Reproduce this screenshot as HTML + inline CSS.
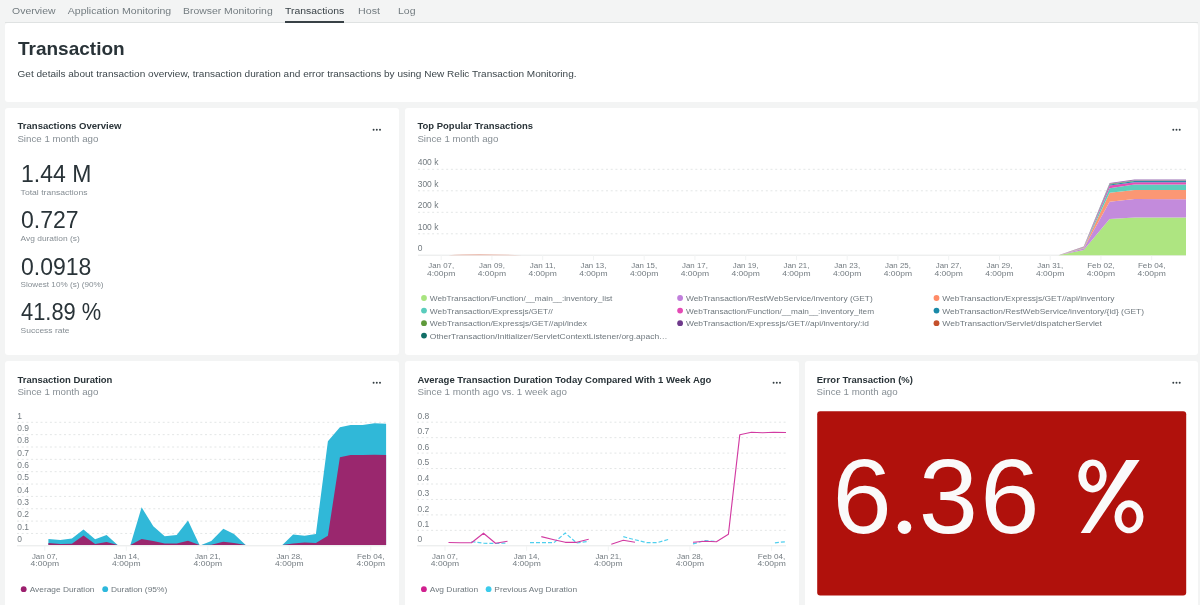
<!DOCTYPE html>
<html><head><meta charset="utf-8"><style>
html,body{margin:0;padding:0;width:1200px;height:605px;overflow:hidden;background:#f3f4f4}
svg{display:block;will-change:transform;-webkit-font-smoothing:antialiased;font-family:"Liberation Sans", sans-serif}
</style></head><body>
<svg width="1200" height="605" viewBox="0 0 1200 605">
<rect x="0" y="0" width="1200" height="605" fill="#f3f4f4"/>
<rect x="5" y="22" width="1193" height="1" fill="#dfe2e2"/>
<text x="12.1" y="14" font-size="9.7" fill="#737c80" font-weight="400" text-anchor="start" textLength="43.4" lengthAdjust="spacingAndGlyphs" >Overview</text>
<text x="67.8" y="14" font-size="9.7" fill="#737c80" font-weight="400" text-anchor="start" textLength="103.4" lengthAdjust="spacingAndGlyphs" >Application Monitoring</text>
<text x="183.0" y="14" font-size="9.7" fill="#737c80" font-weight="400" text-anchor="start" textLength="89.7" lengthAdjust="spacingAndGlyphs" >Browser Monitoring</text>
<text x="285.1" y="14" font-size="9.7" fill="#3a4348" font-weight="400" text-anchor="start" textLength="59.1" lengthAdjust="spacingAndGlyphs" >Transactions</text>
<text x="358.0" y="14" font-size="9.7" fill="#737c80" font-weight="400" text-anchor="start" textLength="22.0" lengthAdjust="spacingAndGlyphs" >Host</text>
<text x="398.0" y="14" font-size="9.7" fill="#737c80" font-weight="400" text-anchor="start" textLength="17.5" lengthAdjust="spacingAndGlyphs" >Log</text>
<rect x="285" y="21" width="59" height="2" fill="#384146"/>
<rect x="5" y="23" width="1193" height="79" rx="3" fill="#ffffff"/>
<rect x="5" y="108" width="394" height="247" rx="3" fill="#ffffff"/>
<rect x="405" y="108" width="793" height="247" rx="3" fill="#ffffff"/>
<rect x="5" y="361" width="394" height="279" rx="3" fill="#ffffff"/>
<rect x="405" y="361" width="394" height="279" rx="3" fill="#ffffff"/>
<rect x="805" y="361" width="393" height="279" rx="3" fill="#ffffff"/>
<text x="18" y="55" font-size="19" fill="#293338" font-weight="700" text-anchor="start" >Transaction</text>
<text x="17.5" y="76.5" font-size="9.3" fill="#3d474c" font-weight="400" text-anchor="start" textLength="559" lengthAdjust="spacingAndGlyphs" >Get details about transaction overview, transaction duration and error transactions by using New Relic Transaction Monitoring.</text>
<text x="17.5" y="129.4" font-size="9.6" fill="#293338" font-weight="700" text-anchor="start" textLength="103.9" lengthAdjust="spacingAndGlyphs" >Transactions Overview</text>
<text x="17.4" y="142.0" font-size="9.6" fill="#868e94" font-weight="400" text-anchor="start" textLength="81.0" lengthAdjust="spacingAndGlyphs" >Since 1 month ago</text>
<circle cx="373.6" cy="129.7" r="0.98" fill="#343e43"/>
<circle cx="376.8" cy="129.7" r="0.98" fill="#343e43"/>
<circle cx="380.0" cy="129.7" r="0.98" fill="#343e43"/>
<text x="21" y="182.2" font-size="23" fill="#293338" font-weight="400" text-anchor="start" >1.44 M</text>
<text x="20.6" y="195.0" font-size="8.0" fill="#868e94" font-weight="400" text-anchor="start" textLength="66.9" lengthAdjust="spacingAndGlyphs" >Total transactions</text>
<text x="21" y="228" font-size="23" fill="#293338" font-weight="400" text-anchor="start" >0.727</text>
<text x="20.6" y="240.8" font-size="8.0" fill="#868e94" font-weight="400" text-anchor="start" textLength="59.1" lengthAdjust="spacingAndGlyphs" >Avg duration (s)</text>
<text x="21" y="274.5" font-size="23" fill="#293338" font-weight="400" text-anchor="start" >0.0918</text>
<text x="20.6" y="287.3" font-size="8.0" fill="#868e94" font-weight="400" text-anchor="start" textLength="82.8" lengthAdjust="spacingAndGlyphs" >Slowest 10% (s) (90%)</text>
<text x="21" y="320" font-size="23" fill="#293338" font-weight="400" text-anchor="start" textLength="80.2" lengthAdjust="spacingAndGlyphs" >41.89 %</text>
<text x="20.6" y="332.8" font-size="8.0" fill="#868e94" font-weight="400" text-anchor="start" textLength="48.9" lengthAdjust="spacingAndGlyphs" >Success rate</text>
<text x="417.5" y="129.4" font-size="9.6" fill="#293338" font-weight="700" text-anchor="start" textLength="115.5" lengthAdjust="spacingAndGlyphs" >Top Popular Transactions</text>
<text x="417.4" y="142.0" font-size="9.6" fill="#868e94" font-weight="400" text-anchor="start" textLength="81.0" lengthAdjust="spacingAndGlyphs" >Since 1 month ago</text>
<circle cx="1173.3" cy="129.7" r="0.98" fill="#343e43"/>
<circle cx="1176.5" cy="129.7" r="0.98" fill="#343e43"/>
<circle cx="1179.7" cy="129.7" r="0.98" fill="#343e43"/>
<line x1="418" y1="169.3" x2="1186" y2="169.3" stroke="#e3e6e6" stroke-width="1" stroke-dasharray="2 2.7"/>
<line x1="418" y1="190.8" x2="1186" y2="190.8" stroke="#e3e6e6" stroke-width="1" stroke-dasharray="2 2.7"/>
<line x1="418" y1="212.3" x2="1186" y2="212.3" stroke="#e3e6e6" stroke-width="1" stroke-dasharray="2 2.7"/>
<line x1="418" y1="233.8" x2="1186" y2="233.8" stroke="#e3e6e6" stroke-width="1" stroke-dasharray="2 2.7"/>
<text x="417.7" y="165.20000000000002" font-size="8.6" fill="#737b80" font-weight="400" text-anchor="start" textLength="20.74" lengthAdjust="spacingAndGlyphs" >400 k</text>
<text x="417.7" y="186.70000000000002" font-size="8.6" fill="#737b80" font-weight="400" text-anchor="start" textLength="20.74" lengthAdjust="spacingAndGlyphs" >300 k</text>
<text x="417.7" y="208.20000000000002" font-size="8.6" fill="#737b80" font-weight="400" text-anchor="start" textLength="20.74" lengthAdjust="spacingAndGlyphs" >200 k</text>
<text x="417.7" y="229.70000000000002" font-size="8.6" fill="#737b80" font-weight="400" text-anchor="start" textLength="20.74" lengthAdjust="spacingAndGlyphs" >100 k</text>
<text x="417.7" y="251.1" font-size="8.6" fill="#737b80" font-weight="400" text-anchor="start" textLength="4.72" lengthAdjust="spacingAndGlyphs" >0</text>
<line x1="418" y1="255.2" x2="1186" y2="255.2" stroke="#e6e8e8" stroke-width="1"/>
<line x1="441.2" y1="255.2" x2="441.2" y2="260.2" stroke="#f1f3f3" stroke-width="1"/>
<text x="441.2" y="268.3" font-size="8.0" fill="#737b80" font-weight="400" text-anchor="middle" textLength="25.8" lengthAdjust="spacingAndGlyphs" >Jan 07,</text>
<text x="441.2" y="275.6" font-size="8.0" fill="#737b80" font-weight="400" text-anchor="middle" textLength="28.4" lengthAdjust="spacingAndGlyphs" >4:00pm</text>
<line x1="491.95" y1="255.2" x2="491.95" y2="260.2" stroke="#f1f3f3" stroke-width="1"/>
<text x="491.95" y="268.3" font-size="8.0" fill="#737b80" font-weight="400" text-anchor="middle" textLength="25.8" lengthAdjust="spacingAndGlyphs" >Jan 09,</text>
<text x="491.95" y="275.6" font-size="8.0" fill="#737b80" font-weight="400" text-anchor="middle" textLength="28.4" lengthAdjust="spacingAndGlyphs" >4:00pm</text>
<line x1="542.7" y1="255.2" x2="542.7" y2="260.2" stroke="#f1f3f3" stroke-width="1"/>
<text x="542.7" y="268.3" font-size="8.0" fill="#737b80" font-weight="400" text-anchor="middle" textLength="25.8" lengthAdjust="spacingAndGlyphs" >Jan 11,</text>
<text x="542.7" y="275.6" font-size="8.0" fill="#737b80" font-weight="400" text-anchor="middle" textLength="28.4" lengthAdjust="spacingAndGlyphs" >4:00pm</text>
<line x1="593.45" y1="255.2" x2="593.45" y2="260.2" stroke="#f1f3f3" stroke-width="1"/>
<text x="593.45" y="268.3" font-size="8.0" fill="#737b80" font-weight="400" text-anchor="middle" textLength="25.8" lengthAdjust="spacingAndGlyphs" >Jan 13,</text>
<text x="593.45" y="275.6" font-size="8.0" fill="#737b80" font-weight="400" text-anchor="middle" textLength="28.4" lengthAdjust="spacingAndGlyphs" >4:00pm</text>
<line x1="644.2" y1="255.2" x2="644.2" y2="260.2" stroke="#f1f3f3" stroke-width="1"/>
<text x="644.2" y="268.3" font-size="8.0" fill="#737b80" font-weight="400" text-anchor="middle" textLength="25.8" lengthAdjust="spacingAndGlyphs" >Jan 15,</text>
<text x="644.2" y="275.6" font-size="8.0" fill="#737b80" font-weight="400" text-anchor="middle" textLength="28.4" lengthAdjust="spacingAndGlyphs" >4:00pm</text>
<line x1="694.95" y1="255.2" x2="694.95" y2="260.2" stroke="#f1f3f3" stroke-width="1"/>
<text x="694.95" y="268.3" font-size="8.0" fill="#737b80" font-weight="400" text-anchor="middle" textLength="25.8" lengthAdjust="spacingAndGlyphs" >Jan 17,</text>
<text x="694.95" y="275.6" font-size="8.0" fill="#737b80" font-weight="400" text-anchor="middle" textLength="28.4" lengthAdjust="spacingAndGlyphs" >4:00pm</text>
<line x1="745.7" y1="255.2" x2="745.7" y2="260.2" stroke="#f1f3f3" stroke-width="1"/>
<text x="745.7" y="268.3" font-size="8.0" fill="#737b80" font-weight="400" text-anchor="middle" textLength="25.8" lengthAdjust="spacingAndGlyphs" >Jan 19,</text>
<text x="745.7" y="275.6" font-size="8.0" fill="#737b80" font-weight="400" text-anchor="middle" textLength="28.4" lengthAdjust="spacingAndGlyphs" >4:00pm</text>
<line x1="796.45" y1="255.2" x2="796.45" y2="260.2" stroke="#f1f3f3" stroke-width="1"/>
<text x="796.45" y="268.3" font-size="8.0" fill="#737b80" font-weight="400" text-anchor="middle" textLength="25.8" lengthAdjust="spacingAndGlyphs" >Jan 21,</text>
<text x="796.45" y="275.6" font-size="8.0" fill="#737b80" font-weight="400" text-anchor="middle" textLength="28.4" lengthAdjust="spacingAndGlyphs" >4:00pm</text>
<line x1="847.2" y1="255.2" x2="847.2" y2="260.2" stroke="#f1f3f3" stroke-width="1"/>
<text x="847.2" y="268.3" font-size="8.0" fill="#737b80" font-weight="400" text-anchor="middle" textLength="25.8" lengthAdjust="spacingAndGlyphs" >Jan 23,</text>
<text x="847.2" y="275.6" font-size="8.0" fill="#737b80" font-weight="400" text-anchor="middle" textLength="28.4" lengthAdjust="spacingAndGlyphs" >4:00pm</text>
<line x1="897.95" y1="255.2" x2="897.95" y2="260.2" stroke="#f1f3f3" stroke-width="1"/>
<text x="897.95" y="268.3" font-size="8.0" fill="#737b80" font-weight="400" text-anchor="middle" textLength="25.8" lengthAdjust="spacingAndGlyphs" >Jan 25,</text>
<text x="897.95" y="275.6" font-size="8.0" fill="#737b80" font-weight="400" text-anchor="middle" textLength="28.4" lengthAdjust="spacingAndGlyphs" >4:00pm</text>
<line x1="948.7" y1="255.2" x2="948.7" y2="260.2" stroke="#f1f3f3" stroke-width="1"/>
<text x="948.7" y="268.3" font-size="8.0" fill="#737b80" font-weight="400" text-anchor="middle" textLength="25.8" lengthAdjust="spacingAndGlyphs" >Jan 27,</text>
<text x="948.7" y="275.6" font-size="8.0" fill="#737b80" font-weight="400" text-anchor="middle" textLength="28.4" lengthAdjust="spacingAndGlyphs" >4:00pm</text>
<line x1="999.45" y1="255.2" x2="999.45" y2="260.2" stroke="#f1f3f3" stroke-width="1"/>
<text x="999.45" y="268.3" font-size="8.0" fill="#737b80" font-weight="400" text-anchor="middle" textLength="25.8" lengthAdjust="spacingAndGlyphs" >Jan 29,</text>
<text x="999.45" y="275.6" font-size="8.0" fill="#737b80" font-weight="400" text-anchor="middle" textLength="28.4" lengthAdjust="spacingAndGlyphs" >4:00pm</text>
<line x1="1050.2" y1="255.2" x2="1050.2" y2="260.2" stroke="#f1f3f3" stroke-width="1"/>
<text x="1050.2" y="268.3" font-size="8.0" fill="#737b80" font-weight="400" text-anchor="middle" textLength="25.8" lengthAdjust="spacingAndGlyphs" >Jan 31,</text>
<text x="1050.2" y="275.6" font-size="8.0" fill="#737b80" font-weight="400" text-anchor="middle" textLength="28.4" lengthAdjust="spacingAndGlyphs" >4:00pm</text>
<line x1="1100.95" y1="255.2" x2="1100.95" y2="260.2" stroke="#f1f3f3" stroke-width="1"/>
<text x="1100.95" y="268.3" font-size="8.0" fill="#737b80" font-weight="400" text-anchor="middle" textLength="27.6" lengthAdjust="spacingAndGlyphs" >Feb 02,</text>
<text x="1100.95" y="275.6" font-size="8.0" fill="#737b80" font-weight="400" text-anchor="middle" textLength="28.4" lengthAdjust="spacingAndGlyphs" >4:00pm</text>
<line x1="1151.7" y1="255.2" x2="1151.7" y2="260.2" stroke="#f1f3f3" stroke-width="1"/>
<text x="1151.7" y="268.3" font-size="8.0" fill="#737b80" font-weight="400" text-anchor="middle" textLength="27.6" lengthAdjust="spacingAndGlyphs" >Feb 04,</text>
<text x="1151.7" y="275.6" font-size="8.0" fill="#737b80" font-weight="400" text-anchor="middle" textLength="28.4" lengthAdjust="spacingAndGlyphs" >4:00pm</text>
<polygon points="1058.3,255.2 1083.7,250.0 1109.6,219.0 1134.5,217.6 1186,217.6 1186,255.2 1134.5,255.2 1109.6,255.2 1083.7,255.2 1058.3,255.2" fill="#aee581"/>
<polygon points="1058.3,255.2 1083.7,248.5 1109.6,201.8 1134.5,199.0 1186,199.3 1186,217.6 1134.5,217.6 1109.6,219.0 1083.7,250.0 1058.3,255.2" fill="#c38bdc"/>
<polygon points="1058.3,255.2 1083.7,247.9 1109.6,192.7 1134.5,190.0 1186,190.0 1186,199.3 1134.5,199.0 1109.6,201.8 1083.7,248.5 1058.3,255.2" fill="#fb9774"/>
<polygon points="1058.3,255.2 1083.7,247.4 1109.6,188.2 1134.5,184.5 1186,184.5 1186,190.0 1134.5,190.0 1109.6,192.7 1083.7,247.9 1058.3,255.2" fill="#5dcdbc"/>
<polygon points="1058.3,255.2 1083.7,247.0 1109.6,185.5 1134.5,182.3 1186,182.3 1186,184.5 1134.5,184.5 1109.6,188.2 1083.7,247.4 1058.3,255.2" fill="#e54db5"/>
<polygon points="1058.3,255.2 1083.7,246.9 1109.6,184.4 1134.5,181.1 1186,181.1 1186,182.3 1134.5,182.3 1109.6,185.5 1083.7,247.0 1058.3,255.2" fill="#2a8cac"/>
<polygon points="1058.3,255.2 1083.7,246.8 1109.6,183.8 1134.5,180.4 1186,180.4 1186,181.1 1134.5,181.1 1109.6,184.4 1083.7,246.9 1058.3,255.2" fill="#6e9f4a"/>
<polygon points="1058.3,255.2 1083.7,246.6 1109.6,183.1 1134.5,179.6 1186,179.6 1186,180.4 1134.5,180.4 1109.6,183.8 1083.7,246.8 1058.3,255.2" fill="#9a6cb4"/>
<path d="M448.3 255.2 Q474 253.29999999999998 521.7 255.2 Z" fill="#eab0a0"/>
<circle cx="424" cy="298" r="2.9" fill="#a8e47f"/>
<text x="429.8" y="301" font-size="7.7" fill="#6f787e" font-weight="400" text-anchor="start" textLength="182.6" lengthAdjust="spacingAndGlyphs" >WebTransaction/Function/__main__:inventory_list</text>
<circle cx="424" cy="310.6" r="2.9" fill="#59ccbc"/>
<text x="429.8" y="313.6" font-size="7.7" fill="#6f787e" font-weight="400" text-anchor="start" textLength="123" lengthAdjust="spacingAndGlyphs" >WebTransaction/Expressjs/GET//</text>
<circle cx="424" cy="323.2" r="2.9" fill="#5f9a3b"/>
<text x="429.8" y="326.2" font-size="7.7" fill="#6f787e" font-weight="400" text-anchor="start" textLength="157.2" lengthAdjust="spacingAndGlyphs" >WebTransaction/Expressjs/GET//api/index</text>
<circle cx="424" cy="335.6" r="2.9" fill="#106e66"/>
<text x="429.8" y="338.6" font-size="7.7" fill="#6f787e" font-weight="400" text-anchor="start" textLength="237.8" lengthAdjust="spacingAndGlyphs" >OtherTransaction/Initializer/ServletContextListener/org.apach…</text>
<circle cx="680.1" cy="298" r="2.9" fill="#c17fdc"/>
<text x="685.9" y="301" font-size="7.7" fill="#6f787e" font-weight="400" text-anchor="start" textLength="186.9" lengthAdjust="spacingAndGlyphs" >WebTransaction/RestWebService/inventory (GET)</text>
<circle cx="680.1" cy="310.6" r="2.9" fill="#e44bb5"/>
<text x="685.9" y="313.6" font-size="7.7" fill="#6f787e" font-weight="400" text-anchor="start" textLength="188.2" lengthAdjust="spacingAndGlyphs" >WebTransaction/Function/__main__:inventory_item</text>
<circle cx="680.1" cy="323.2" r="2.9" fill="#6f3a8c"/>
<text x="685.9" y="326.2" font-size="7.7" fill="#6f787e" font-weight="400" text-anchor="start" textLength="183" lengthAdjust="spacingAndGlyphs" >WebTransaction/Expressjs/GET//api/inventory/:id</text>
<circle cx="936.5" cy="298" r="2.9" fill="#ff8b67"/>
<text x="942.2" y="301" font-size="7.7" fill="#6f787e" font-weight="400" text-anchor="start" textLength="172.3" lengthAdjust="spacingAndGlyphs" >WebTransaction/Expressjs/GET//api/inventory</text>
<circle cx="936.5" cy="310.6" r="2.9" fill="#1a8aa8"/>
<text x="942.2" y="313.6" font-size="7.7" fill="#6f787e" font-weight="400" text-anchor="start" textLength="201.8" lengthAdjust="spacingAndGlyphs" >WebTransaction/RestWebService/inventory/{id} (GET)</text>
<circle cx="936.5" cy="323.2" r="2.9" fill="#c4502c"/>
<text x="942.2" y="326.2" font-size="7.7" fill="#6f787e" font-weight="400" text-anchor="start" textLength="159.8" lengthAdjust="spacingAndGlyphs" >WebTransaction/Servlet/dispatcherServlet</text>
<text x="17.5" y="382.8" font-size="9.6" fill="#293338" font-weight="700" text-anchor="start" textLength="94.9" lengthAdjust="spacingAndGlyphs" >Transaction Duration</text>
<text x="17.4" y="395.40000000000003" font-size="9.6" fill="#868e94" font-weight="400" text-anchor="start" textLength="81.0" lengthAdjust="spacingAndGlyphs" >Since 1 month ago</text>
<circle cx="373.6" cy="382.7" r="0.98" fill="#343e43"/>
<circle cx="376.8" cy="382.7" r="0.98" fill="#343e43"/>
<circle cx="380.0" cy="382.7" r="0.98" fill="#343e43"/>
<line x1="17" y1="422.30" x2="386" y2="422.30" stroke="#e3e6e6" stroke-width="1" stroke-dasharray="2 2.7"/>
<line x1="17" y1="434.65" x2="386" y2="434.65" stroke="#e3e6e6" stroke-width="1" stroke-dasharray="2 2.7"/>
<line x1="17" y1="447.00" x2="386" y2="447.00" stroke="#e3e6e6" stroke-width="1" stroke-dasharray="2 2.7"/>
<line x1="17" y1="459.35" x2="386" y2="459.35" stroke="#e3e6e6" stroke-width="1" stroke-dasharray="2 2.7"/>
<line x1="17" y1="471.70" x2="386" y2="471.70" stroke="#e3e6e6" stroke-width="1" stroke-dasharray="2 2.7"/>
<line x1="17" y1="484.05" x2="386" y2="484.05" stroke="#e3e6e6" stroke-width="1" stroke-dasharray="2 2.7"/>
<line x1="17" y1="496.40" x2="386" y2="496.40" stroke="#e3e6e6" stroke-width="1" stroke-dasharray="2 2.7"/>
<line x1="17" y1="508.75" x2="386" y2="508.75" stroke="#e3e6e6" stroke-width="1" stroke-dasharray="2 2.7"/>
<line x1="17" y1="521.10" x2="386" y2="521.10" stroke="#e3e6e6" stroke-width="1" stroke-dasharray="2 2.7"/>
<line x1="17" y1="533.45" x2="386" y2="533.45" stroke="#e3e6e6" stroke-width="1" stroke-dasharray="2 2.7"/>
<text x="17.2" y="418.50" font-size="8.6" fill="#737b80" font-weight="400" text-anchor="start" textLength="4.72" lengthAdjust="spacingAndGlyphs" >1</text>
<text x="17.2" y="430.85" font-size="8.6" fill="#737b80" font-weight="400" text-anchor="start" textLength="11.79" lengthAdjust="spacingAndGlyphs" >0.9</text>
<text x="17.2" y="443.20" font-size="8.6" fill="#737b80" font-weight="400" text-anchor="start" textLength="11.79" lengthAdjust="spacingAndGlyphs" >0.8</text>
<text x="17.2" y="455.55" font-size="8.6" fill="#737b80" font-weight="400" text-anchor="start" textLength="11.79" lengthAdjust="spacingAndGlyphs" >0.7</text>
<text x="17.2" y="467.90" font-size="8.6" fill="#737b80" font-weight="400" text-anchor="start" textLength="11.79" lengthAdjust="spacingAndGlyphs" >0.6</text>
<text x="17.2" y="480.25" font-size="8.6" fill="#737b80" font-weight="400" text-anchor="start" textLength="11.79" lengthAdjust="spacingAndGlyphs" >0.5</text>
<text x="17.2" y="492.60" font-size="8.6" fill="#737b80" font-weight="400" text-anchor="start" textLength="11.79" lengthAdjust="spacingAndGlyphs" >0.4</text>
<text x="17.2" y="504.95" font-size="8.6" fill="#737b80" font-weight="400" text-anchor="start" textLength="11.79" lengthAdjust="spacingAndGlyphs" >0.3</text>
<text x="17.2" y="517.30" font-size="8.6" fill="#737b80" font-weight="400" text-anchor="start" textLength="11.79" lengthAdjust="spacingAndGlyphs" >0.2</text>
<text x="17.2" y="529.65" font-size="8.6" fill="#737b80" font-weight="400" text-anchor="start" textLength="11.79" lengthAdjust="spacingAndGlyphs" >0.1</text>
<text x="17.2" y="542.00" font-size="8.6" fill="#737b80" font-weight="400" text-anchor="start" textLength="4.72" lengthAdjust="spacingAndGlyphs" >0</text>
<line x1="17" y1="545.8" x2="386" y2="545.8" stroke="#e6e8e8" stroke-width="1"/>
<line x1="44.8" y1="545.8" x2="44.8" y2="550.8" stroke="#f1f3f3" stroke-width="1"/>
<text x="44.8" y="558.6" font-size="8.0" fill="#737b80" font-weight="400" text-anchor="middle" textLength="25.8" lengthAdjust="spacingAndGlyphs" >Jan 07,</text>
<text x="44.8" y="566.2" font-size="8.0" fill="#737b80" font-weight="400" text-anchor="middle" textLength="28.4" lengthAdjust="spacingAndGlyphs" >4:00pm</text>
<line x1="126.3" y1="545.8" x2="126.3" y2="550.8" stroke="#f1f3f3" stroke-width="1"/>
<text x="126.3" y="558.6" font-size="8.0" fill="#737b80" font-weight="400" text-anchor="middle" textLength="25.8" lengthAdjust="spacingAndGlyphs" >Jan 14,</text>
<text x="126.3" y="566.2" font-size="8.0" fill="#737b80" font-weight="400" text-anchor="middle" textLength="28.4" lengthAdjust="spacingAndGlyphs" >4:00pm</text>
<line x1="207.8" y1="545.8" x2="207.8" y2="550.8" stroke="#f1f3f3" stroke-width="1"/>
<text x="207.8" y="558.6" font-size="8.0" fill="#737b80" font-weight="400" text-anchor="middle" textLength="25.8" lengthAdjust="spacingAndGlyphs" >Jan 21,</text>
<text x="207.8" y="566.2" font-size="8.0" fill="#737b80" font-weight="400" text-anchor="middle" textLength="28.4" lengthAdjust="spacingAndGlyphs" >4:00pm</text>
<line x1="289.3" y1="545.8" x2="289.3" y2="550.8" stroke="#f1f3f3" stroke-width="1"/>
<text x="289.3" y="558.6" font-size="8.0" fill="#737b80" font-weight="400" text-anchor="middle" textLength="25.8" lengthAdjust="spacingAndGlyphs" >Jan 28,</text>
<text x="289.3" y="566.2" font-size="8.0" fill="#737b80" font-weight="400" text-anchor="middle" textLength="28.4" lengthAdjust="spacingAndGlyphs" >4:00pm</text>
<line x1="370.8" y1="545.8" x2="370.8" y2="550.8" stroke="#f1f3f3" stroke-width="1"/>
<text x="370.8" y="558.6" font-size="8.0" fill="#737b80" font-weight="400" text-anchor="middle" textLength="27.6" lengthAdjust="spacingAndGlyphs" >Feb 04,</text>
<text x="370.8" y="566.2" font-size="8.0" fill="#737b80" font-weight="400" text-anchor="middle" textLength="28.4" lengthAdjust="spacingAndGlyphs" >4:00pm</text>
<polygon points="48.4,545 48.4,539 60.3,540.1 71.9,538.6 83.5,529.6 95.1,539.2 106.6,535.1 117.6,545 117.6,545 48.4,545" fill="#30b8d8"/>
<polygon points="130.4,545 141.6,507.3 153.3,526.3 164.7,536.3 176.7,535 188,520.4 199.5,545 199.5,545 130.4,545" fill="#30b8d8"/>
<polygon points="201.3,545 211.3,541 223.3,528.7 234,534 245.7,545 245.7,545 201.3,545" fill="#30b8d8"/>
<polygon points="282.4,545 293.1,534.6 304.6,535.8 315.9,533.9 327.9,441.2 339.9,427.3 350.6,425.1 362.6,425.1 374.6,423.2 386.1,423.7 386.1,545 386.1,545 282.4,545" fill="#30b8d8"/>
<polygon points="48.4,545 48.4,543.1 60.3,543.9 71.9,543.7 83.5,535.6 95.1,543.9 106.6,542 117.6,545 117.6,545 48.4,545" fill="#9a276e"/>
<polygon points="130.4,545 141.6,539 153.3,540.9 164.7,543.6 176.7,543.6 188,540.7 199.5,545 199.5,545 130.4,545" fill="#9a276e"/>
<polygon points="201.3,545 211.3,544.7 223.3,541.7 234,543 245.7,545 245.7,545 201.3,545" fill="#9a276e"/>
<polygon points="282.4,545 293.1,543.5 304.6,542.5 315.9,543 327.9,535.8 339.9,457.2 350.6,455 362.6,455 374.6,454.8 386.1,455 386.1,545 386.1,545 282.4,545" fill="#9a276e"/>
<circle cx="23.7" cy="589.2" r="2.9" fill="#9c1f6e"/>
<text x="29.7" y="592.2" font-size="7.7" fill="#6f787e" font-weight="400" text-anchor="start" textLength="64.8" lengthAdjust="spacingAndGlyphs" >Average Duration</text>
<circle cx="105.2" cy="589.2" r="2.9" fill="#2db8dc"/>
<text x="110.9" y="592.2" font-size="7.7" fill="#6f787e" font-weight="400" text-anchor="start" textLength="56.3" lengthAdjust="spacingAndGlyphs" >Duration (95%)</text>
<text x="417.5" y="382.8" font-size="9.6" fill="#293338" font-weight="700" text-anchor="start" textLength="293.9" lengthAdjust="spacingAndGlyphs" >Average Transaction Duration Today Compared With 1 Week Ago</text>
<text x="417.4" y="395.40000000000003" font-size="9.6" fill="#868e94" font-weight="400" text-anchor="start" textLength="149.5" lengthAdjust="spacingAndGlyphs" >Since 1 month ago vs. 1 week ago</text>
<circle cx="773.5999999999999" cy="382.7" r="0.98" fill="#343e43"/>
<circle cx="776.8" cy="382.7" r="0.98" fill="#343e43"/>
<circle cx="780.0" cy="382.7" r="0.98" fill="#343e43"/>
<line x1="417" y1="422.20" x2="786" y2="422.20" stroke="#e3e6e6" stroke-width="1" stroke-dasharray="2 2.7"/>
<line x1="417" y1="437.65" x2="786" y2="437.65" stroke="#e3e6e6" stroke-width="1" stroke-dasharray="2 2.7"/>
<line x1="417" y1="453.10" x2="786" y2="453.10" stroke="#e3e6e6" stroke-width="1" stroke-dasharray="2 2.7"/>
<line x1="417" y1="468.55" x2="786" y2="468.55" stroke="#e3e6e6" stroke-width="1" stroke-dasharray="2 2.7"/>
<line x1="417" y1="484.00" x2="786" y2="484.00" stroke="#e3e6e6" stroke-width="1" stroke-dasharray="2 2.7"/>
<line x1="417" y1="499.45" x2="786" y2="499.45" stroke="#e3e6e6" stroke-width="1" stroke-dasharray="2 2.7"/>
<line x1="417" y1="514.90" x2="786" y2="514.90" stroke="#e3e6e6" stroke-width="1" stroke-dasharray="2 2.7"/>
<line x1="417" y1="530.35" x2="786" y2="530.35" stroke="#e3e6e6" stroke-width="1" stroke-dasharray="2 2.7"/>
<text x="417.5" y="418.80" font-size="8.6" fill="#737b80" font-weight="400" text-anchor="start" textLength="11.79" lengthAdjust="spacingAndGlyphs" >0.8</text>
<text x="417.5" y="434.25" font-size="8.6" fill="#737b80" font-weight="400" text-anchor="start" textLength="11.79" lengthAdjust="spacingAndGlyphs" >0.7</text>
<text x="417.5" y="449.70" font-size="8.6" fill="#737b80" font-weight="400" text-anchor="start" textLength="11.79" lengthAdjust="spacingAndGlyphs" >0.6</text>
<text x="417.5" y="465.15" font-size="8.6" fill="#737b80" font-weight="400" text-anchor="start" textLength="11.79" lengthAdjust="spacingAndGlyphs" >0.5</text>
<text x="417.5" y="480.60" font-size="8.6" fill="#737b80" font-weight="400" text-anchor="start" textLength="11.79" lengthAdjust="spacingAndGlyphs" >0.4</text>
<text x="417.5" y="496.05" font-size="8.6" fill="#737b80" font-weight="400" text-anchor="start" textLength="11.79" lengthAdjust="spacingAndGlyphs" >0.3</text>
<text x="417.5" y="511.50" font-size="8.6" fill="#737b80" font-weight="400" text-anchor="start" textLength="11.79" lengthAdjust="spacingAndGlyphs" >0.2</text>
<text x="417.5" y="526.95" font-size="8.6" fill="#737b80" font-weight="400" text-anchor="start" textLength="11.79" lengthAdjust="spacingAndGlyphs" >0.1</text>
<text x="417.5" y="542.40" font-size="8.6" fill="#737b80" font-weight="400" text-anchor="start" textLength="4.72" lengthAdjust="spacingAndGlyphs" >0</text>
<line x1="417" y1="545.8" x2="786" y2="545.8" stroke="#e6e8e8" stroke-width="1"/>
<line x1="445.0" y1="545.8" x2="445.0" y2="550.8" stroke="#f1f3f3" stroke-width="1"/>
<text x="445.0" y="558.6" font-size="8.0" fill="#737b80" font-weight="400" text-anchor="middle" textLength="25.8" lengthAdjust="spacingAndGlyphs" >Jan 07,</text>
<text x="445.0" y="566.2" font-size="8.0" fill="#737b80" font-weight="400" text-anchor="middle" textLength="28.4" lengthAdjust="spacingAndGlyphs" >4:00pm</text>
<line x1="526.65" y1="545.8" x2="526.65" y2="550.8" stroke="#f1f3f3" stroke-width="1"/>
<text x="526.65" y="558.6" font-size="8.0" fill="#737b80" font-weight="400" text-anchor="middle" textLength="25.8" lengthAdjust="spacingAndGlyphs" >Jan 14,</text>
<text x="526.65" y="566.2" font-size="8.0" fill="#737b80" font-weight="400" text-anchor="middle" textLength="28.4" lengthAdjust="spacingAndGlyphs" >4:00pm</text>
<line x1="608.3" y1="545.8" x2="608.3" y2="550.8" stroke="#f1f3f3" stroke-width="1"/>
<text x="608.3" y="558.6" font-size="8.0" fill="#737b80" font-weight="400" text-anchor="middle" textLength="25.8" lengthAdjust="spacingAndGlyphs" >Jan 21,</text>
<text x="608.3" y="566.2" font-size="8.0" fill="#737b80" font-weight="400" text-anchor="middle" textLength="28.4" lengthAdjust="spacingAndGlyphs" >4:00pm</text>
<line x1="689.95" y1="545.8" x2="689.95" y2="550.8" stroke="#f1f3f3" stroke-width="1"/>
<text x="689.95" y="558.6" font-size="8.0" fill="#737b80" font-weight="400" text-anchor="middle" textLength="25.8" lengthAdjust="spacingAndGlyphs" >Jan 28,</text>
<text x="689.95" y="566.2" font-size="8.0" fill="#737b80" font-weight="400" text-anchor="middle" textLength="28.4" lengthAdjust="spacingAndGlyphs" >4:00pm</text>
<line x1="771.6" y1="545.8" x2="771.6" y2="550.8" stroke="#f1f3f3" stroke-width="1"/>
<text x="771.6" y="558.6" font-size="8.0" fill="#737b80" font-weight="400" text-anchor="middle" textLength="27.6" lengthAdjust="spacingAndGlyphs" >Feb 04,</text>
<text x="771.6" y="566.2" font-size="8.0" fill="#737b80" font-weight="400" text-anchor="middle" textLength="28.4" lengthAdjust="spacingAndGlyphs" >4:00pm</text>
<polyline points="471.5,541.5 483.5,543.2 495.5,543.5 507.5,543" fill="none" stroke="#4fcfee" stroke-width="1.2" stroke-dasharray="4 2"/>
<polyline points="530,542.6 554,542.6 565.3,533 576.7,543 588.7,541.3" fill="none" stroke="#4fcfee" stroke-width="1.2" stroke-dasharray="4 2"/>
<polyline points="623.3,536.7 634.7,539.7 646.7,542.6 657.3,542.6 670,539" fill="none" stroke="#4fcfee" stroke-width="1.2" stroke-dasharray="4 2"/>
<polyline points="693,543.9 705,540.5 716.4,541.5" fill="none" stroke="#4fcfee" stroke-width="1.2" stroke-dasharray="4 2"/>
<polyline points="774.9,542.8 786,541.7" fill="none" stroke="#4fcfee" stroke-width="1.2" stroke-dasharray="4 2"/>
<polyline points="448.5,542.5 460,542.7 471.5,542.8 483.5,533.2 495.5,543.3 507.5,541.2" fill="none" stroke="#d23ba2" stroke-width="1.15" stroke-linejoin="round"/>
<polyline points="541.3,536.6 554,539.7 565.3,542.3 576.7,542.3 588.7,539.3" fill="none" stroke="#d23ba2" stroke-width="1.15" stroke-linejoin="round"/>
<polyline points="611.3,544.3 623.3,540.3 635,542.3" fill="none" stroke="#d23ba2" stroke-width="1.15" stroke-linejoin="round"/>
<polyline points="693,542.3 705,541.2 716.4,541.7 728.4,534.3 739.8,434.7 751.4,432.3 762.6,432.7 773.8,432.3 786,432.5" fill="none" stroke="#d23ba2" stroke-width="1.15" stroke-linejoin="round"/>
<circle cx="423.9" cy="589.2" r="2.9" fill="#d0208f"/>
<text x="429.7" y="592.2" font-size="7.7" fill="#6f787e" font-weight="400" text-anchor="start" textLength="48.5" lengthAdjust="spacingAndGlyphs" >Avg Duration</text>
<circle cx="488.6" cy="589.2" r="2.9" fill="#3ccbeb"/>
<text x="494.3" y="592.2" font-size="7.7" fill="#6f787e" font-weight="400" text-anchor="start" textLength="82.8" lengthAdjust="spacingAndGlyphs" >Previous Avg Duration</text>
<text x="816.7" y="382.8" font-size="9.6" fill="#293338" font-weight="700" text-anchor="start" textLength="96.2" lengthAdjust="spacingAndGlyphs" >Error Transaction (%)</text>
<text x="816.6" y="395.40000000000003" font-size="9.6" fill="#868e94" font-weight="400" text-anchor="start" textLength="81.0" lengthAdjust="spacingAndGlyphs" >Since 1 month ago</text>
<circle cx="1173.3" cy="382.7" r="0.98" fill="#343e43"/>
<circle cx="1176.5" cy="382.7" r="0.98" fill="#343e43"/>
<circle cx="1179.7" cy="382.7" r="0.98" fill="#343e43"/>
<rect x="817.2" y="411.2" width="369" height="184.3" rx="3" fill="#b0110c"/>
<text x="832.4" y="533" font-size="106.5" fill="#fafafa">6</text>
<circle cx="904.5" cy="527.3" r="6.75" fill="#fafafa"/>
<text x="918.7" y="533" font-size="106.5" fill="#fafafa">3</text>
<text x="980.2" y="533" font-size="106.5" fill="#fafafa">6</text>
<path fill-rule="evenodd" fill="#fafafa" d="M1092.5 459.4 a14.15 16.5 0 1 0 0.001 0 Z M1093 465.7 a6.8 10 0 1 1 -0.001 0 Z"/>
<path fill-rule="evenodd" fill="#fafafa" d="M1129 500.2 a14.5 16.5 0 1 0 0.001 0 Z M1129 507.3 a7.45 10.2 0 1 1 -0.001 0 Z"/>
<polygon fill="#fafafa" points="1126.2,459.9 1139.6,459.9 1090.1,533 1080.7,533"/>
</svg>
</body></html>
